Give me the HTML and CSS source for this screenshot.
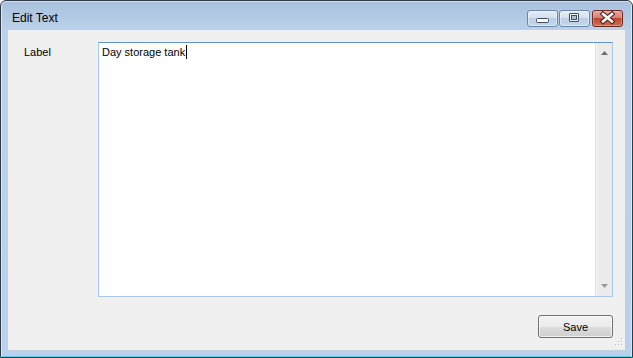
FILE: index.html
```html
<!DOCTYPE html>
<html>
<head>
<meta charset="utf-8">
<link rel="stylesheet" href="styles.css">
</head>
<body>
<div class="window">
  <div class="titlebar">
    <span class="title">Edit Text</span>
    <div class="caption-buttons">
      <div class="cbtn cbtn-blue">
        <svg width="31" height="17" viewBox="0 0 31 17"><rect x="9.5" y="8.5" width="12" height="4" rx="1" fill="#fff" stroke="#3b4d66"/></svg>
      </div>
      <div class="cbtn cbtn-blue">
        <svg width="31" height="17" viewBox="0 0 31 17"><rect x="10.5" y="3.5" width="9" height="8" rx="0.5" fill="#f4f7fb" stroke="#3b4d66"/><rect x="12.5" y="5.5" width="5" height="4" fill="#aebfd6" stroke="#3b4d66"/></svg>
      </div>
      <div class="cbtn cbtn-close">
        <svg width="31" height="17" viewBox="0 0 31 17"><path d="M11 4 L20 11.5 M20 4 L11 11.5" stroke="#4a1c16" stroke-width="4.6" stroke-linecap="square"/><path d="M11 4 L20 11.5 M20 4 L11 11.5" stroke="#fff" stroke-width="2.6" stroke-linecap="square"/></svg>
      </div>
    </div>
  </div>
  <div class="client">
    <div class="form">
      <span class="label">Label</span>
      <div class="textbox">
        <div class="text"><span>Day storage tank</span><span class="caret"></span></div>
        <div class="scrollbar">
          <span class="arrow"><svg width="7" height="4" viewBox="0 0 7 4"><path d="M0 4 L3.5 0 L7 4 Z" fill="#6e6e6e"/></svg></span>
          <span class="arrow"><svg width="7" height="4" viewBox="0 0 7 4"><path d="M0 0 L3.5 4 L7 0 Z" fill="#9a9a9a"/></svg></span>
        </div>
      </div>
      <span></span>
      <div class="actions"><button class="btn">Save</button></div>
    </div>
    <svg class="grip" width="12" height="12" viewBox="0 0 12 12">
      <g fill="#fff"><rect x="10" y="2" width="1" height="1"/><rect x="7" y="5" width="1" height="1"/><rect x="10" y="5" width="1" height="1"/><rect x="4" y="8" width="1" height="1"/><rect x="7" y="8" width="1" height="1"/><rect x="10" y="8" width="1" height="1"/></g>
      <g fill="#b5b5b5"><rect x="9" y="1" width="1" height="1"/><rect x="6" y="4" width="1" height="1"/><rect x="9" y="4" width="1" height="1"/><rect x="3" y="7" width="1" height="1"/><rect x="6" y="7" width="1" height="1"/><rect x="9" y="7" width="1" height="1"/></g>
    </svg>
  </div>
</div>
</body>
</html>
```
FILE: styles.css
```css
html, body {
  margin: 0;
  padding: 0;
  background: #ffffff;
}

.window {
  box-sizing: border-box;
  width: 633px;
  height: 358px;
  display: flex;
  flex-direction: column;
  border: 1px solid #2f3a47;
  border-radius: 6px 6px 0 0;
  background: linear-gradient(to bottom, #a9c1dd 0, #bcd2ea 30px, #b9d1ea 100%);
  box-shadow: inset 1px 0 0 #dbe7f3, inset -1px 0 0 #dbe7f3, inset 0 1px 0 #cfdef0, inset 0 -1px 0 #62cde3;
  font-family: "Liberation Sans", Arial, sans-serif;
  overflow: hidden;
}

.titlebar {
  height: 29px;
  flex: none;
  display: flex;
  align-items: flex-start;
  padding: 0 9px 0 11px;
}

.title {
  margin-top: 10px;
  font-size: 12px;
  line-height: 14px;
  color: #000;
}

.caption-buttons {
  margin-left: auto;
  margin-top: 9px;
  display: flex;
  gap: 1px;
}

.cbtn {
  box-sizing: border-box;
  width: 31px;
  height: 17px;
  border-radius: 3px;
  display: flex;
}

.cbtn svg {
  display: block;
  margin: -1px;
}

.cbtn-blue {
  border: 1px solid #6a86ab;
  background: linear-gradient(to bottom, #e3ecf7 0, #d3e0f0 45%, #bccfe7 50%, #c4d6ec 100%);
  box-shadow: inset 0 0 0 1px rgba(255,255,255,0.45);
}

.cbtn-close {
  margin-left: 1px;
  border: 1px solid #6b2a22;
  background: linear-gradient(to bottom, #e6a89a 0, #d7806f 45%, #c2452f 50%, #d0705c 100%);
  box-shadow: inset 0 0 0 1px rgba(255,210,200,0.35);
}

.client {
  position: relative;
  flex: 1;
  margin: 0 7px 7px 7px;
  background: #f0f0f0;
}

.form {
  display: grid;
  grid-template-columns: 74px 515px;
  grid-template-rows: 255px 23px;
  row-gap: 18px;
  padding: 12px 0 0 16px;
}

.label {
  margin-top: 4px;
  font-size: 11px;
  line-height: 13px;
  color: #000;
}

.textbox {
  box-sizing: border-box;
  display: flex;
  border: 1px solid #a7c9ec;
  border-top-color: #5b97d2;
  background: #fff;
}

.text {
  flex: 1;
  padding: 3px 3px;
  font-size: 11px;
  line-height: 13px;
  color: #000;
  display: flex;
  align-items: flex-start;
}

.caret {
  display: inline-block;
  width: 1px;
  height: 14px;
  margin-top: -1px;
  margin-left: 1px;
  background: #000;
}

.scrollbar {
  width: 17px;
  box-sizing: border-box;
  display: flex;
  flex-direction: column;
  justify-content: space-between;
  background: #ebebeb;
  border-left: 1px solid #e0e0e0;
  box-shadow: inset 1px 0 0 #f6f6f6;
}

.arrow {
  height: 17px;
  box-sizing: border-box;
  display: flex;
  align-items: flex-start;
  justify-content: center;
  padding-left: 1px;
}

.arrow:first-child {
  padding-top: 8px;
}

.arrow:last-child {
  padding-top: 5px;
}

.actions {
  display: flex;
  justify-content: flex-end;
}

.btn {
  width: 75px;
  height: 23px;
  margin: 0;
  padding: 0;
  border: 1px solid #707070;
  border-radius: 3px;
  background: linear-gradient(to bottom, #f2f2f2 0, #ebebeb 50%, #dddddd 51%, #cfcfcf 100%);
  box-shadow: inset 0 0 0 1px rgba(255,255,255,0.7);
  font-family: "Liberation Sans", Arial, sans-serif;
  font-size: 11px;
  color: #000;
}

.grip {
  position: absolute;
  right: 1px;
  bottom: 1px;
}
```
